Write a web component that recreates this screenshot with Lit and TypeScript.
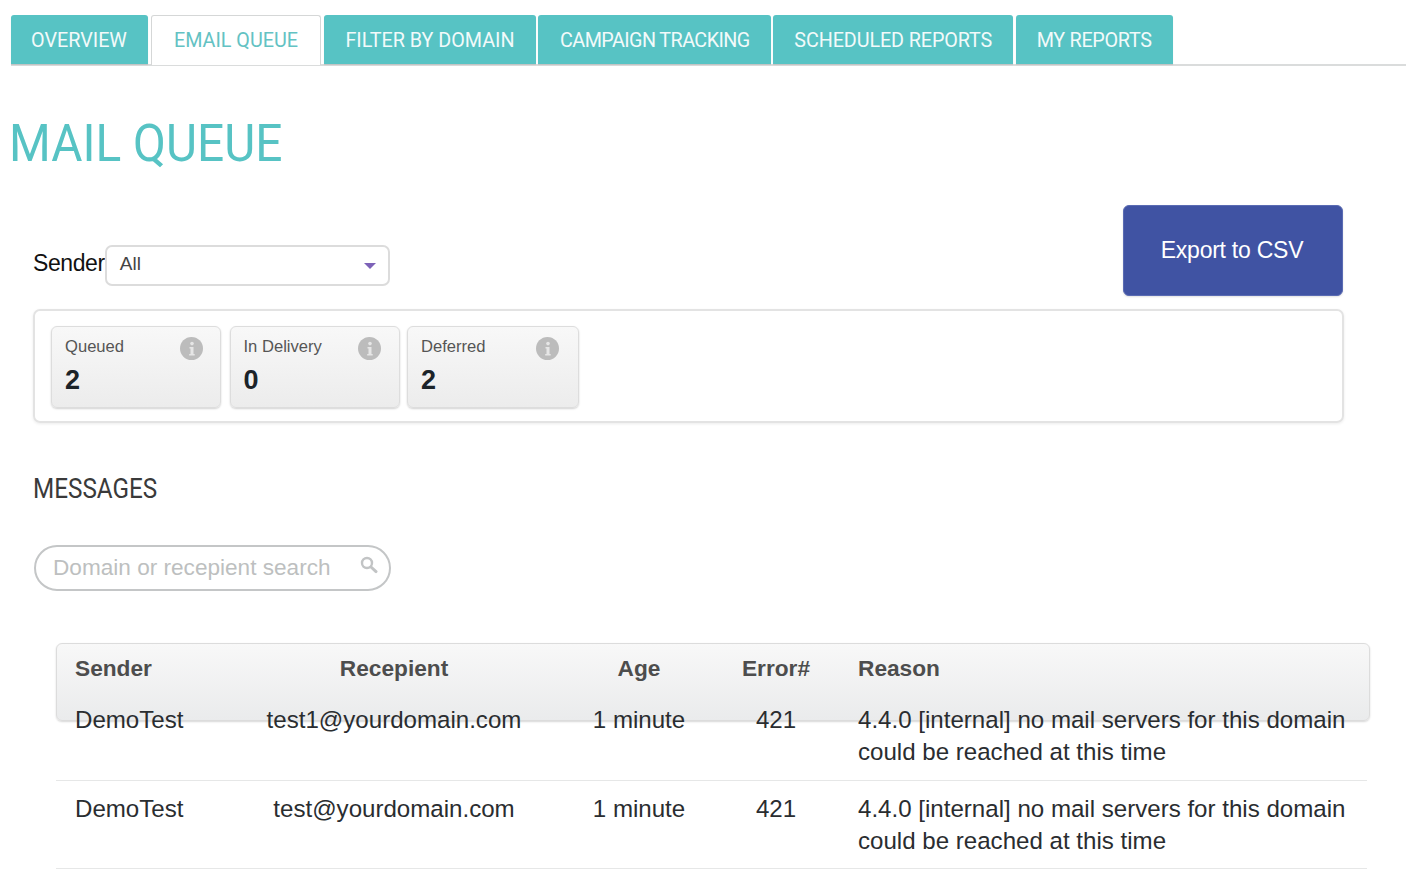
import { LitElement, html, css } from "lit";
import { customElement } from "lit/decorators.js";

const TABS = ["OVERVIEW", "EMAIL QUEUE", "FILTER BY DOMAIN", "CAMPAIGN TRACKING", "SCHEDULED REPORTS", "MY REPORTS"];
const STATS = [
  { label: "Queued", value: "2" },
  { label: "In Delivery", value: "0" },
  { label: "Deferred", value: "2" },
];
const ROWS = [
  { sender: "DemoTest", to: "test1@yourdomain.com" },
  { sender: "DemoTest", to: "test@yourdomain.com" },
];

@customElement("app-root")
export class AppRoot extends LitElement {
  static styles = css`
    :host { display: block; height: 880px; overflow: hidden; background: #fff; font-family: "Liberation Sans", Arial, sans-serif; color: #222; }
    .tabs { display: flex; gap: 2px; margin: 15px 0 0 11px; height: 51px; border-bottom: 2px solid #dadcdc; box-sizing: border-box; }
    .tab { height: 49px; box-sizing: border-box; display: flex; align-items: center; justify-content: center; background: #57c3c4; color: #f2fafa; font: 400 21px Roboto, sans-serif; border-radius: 3px 3px 0 0; flex: none; box-shadow: 0 1px 1px rgba(0,0,0,.12); }
    .tab span { display: inline-block; transform: scaleX(.94); white-space: nowrap; }
    .tab:nth-child(1) { width: 137px; padding-right: 1px; }
    .tab:nth-child(2) { width: 170px; margin-left: 1px; }
    .tab:nth-child(3) { width: 212px; margin-left: 1px; }
    .tab:nth-child(4) { width: 233px; letter-spacing: -0.6px; }
    .tab:nth-child(5) { width: 240px; letter-spacing: -0.1px; }
    .tab:nth-child(6) { width: 157px; margin-left: 1px; letter-spacing: -0.3px; }
    .tab.active { background: #fff; color: #63c2c3; border: 1px solid #d5d7d7; border-bottom: none; height: 50px; padding-bottom: 2px; z-index: 1; box-shadow: none; }
    h1 { margin: 48px 0 0 9px; height: 60px; font: 400 52px/60px Roboto, sans-serif; color: #57c3c4; transform: scaleX(.92); transform-origin: left; white-space: nowrap; }
    .content { padding: 31px 63px 0 34px; }
    .top { display: flex; justify-content: space-between; align-items: flex-end; height: 91px; }
    .sender { display: flex; align-items: center; margin: 0 0 10px -1px; font-size: 23px; color: #111; }
    .sender > span { letter-spacing: -0.4px; padding-bottom: 4px; }
    .select { width: 285px; height: 41px; box-sizing: border-box; border: 2px solid #dcdcdc; border-radius: 7px; padding: 0 12px 3px 13px; display: flex; align-items: center; justify-content: space-between; font-size: 19px; color: #444; }
    .arrow { width: 0; height: 0; border: 6px solid transparent; border-top: 6px solid #7d62b8; border-bottom: none; margin-top: 3px; }
    .export { width: 220px; height: 91px; border: 1px solid #5a6bb3; border-radius: 6px; background: #4053a3; color: #fff; font: 23px "Liberation Sans", sans-serif; letter-spacing: -0.25px; padding: 0 2px 1px 0; box-shadow: 0 1px 2px rgba(0,0,0,.12); }
    .statbox { margin: 13px -1px 0; height: 114px; box-sizing: border-box; border: 2px solid #e3e3e3; border-radius: 7px; padding: 15px 16px; display: flex; gap: 8.5px; box-shadow: 0 1px 3px rgba(0,0,0,.08); }
    .card { width: 170px; height: 82px; box-sizing: border-box; border: 1px solid #dddddd; border-radius: 6px; background: linear-gradient(#f8f8f8, #ececec); box-shadow: 0 1px 2px rgba(0,0,0,.18); padding: 9px 13px; position: relative; }
    .card:nth-child(3) { width: 172px; margin-left: -1px; }
    .card .lab { font-size: 16.6px; line-height: 22px; color: #555; }
    .card .num { font-size: 27px; line-height: 32px; font-weight: 700; color: #1b2329; margin-top: 6px; }
    .info { position: absolute; right: 17px; top: 10px; width: 23px; height: 23px; }
    .card:nth-child(2) .info { right: 18px; }
    .card:nth-child(3) .info { right: 19px; }
    h2 { margin: 48px 0 0 -1px; height: 36px; font: 400 28px/36px Roboto, sans-serif; color: #3a3a3a; transform: scaleX(.867); transform-origin: left; white-space: nowrap; }
    .search { margin-top: 38px; width: 357px; height: 46px; box-sizing: border-box; border: 2px solid #c4c6c7; border-radius: 23px; display: flex; align-items: center; padding: 0 11px 0 17px; }
    .search input { flex: 1; min-width: 0; border: none; outline: none; padding: 0; font: 22.6px "Liberation Sans", sans-serif; color: #555; background: transparent; }
    .search input::placeholder { color: #bdbfc0; opacity: 1; }
    .search svg { flex: none; margin-bottom: 6px; }
    .table { margin: 52px -24px 0 22px; }
    .grid { display: grid; grid-template-columns: 170px 298px 192px 82px 1fr; padding-left: 19px; box-sizing: border-box; }
    .head { height: 78px; width: 1314px; border: 1px solid #dcdcdc; border-radius: 6px; background: linear-gradient(#f8f8f8, #eaebec); box-shadow: 0 1px 2px rgba(0,0,0,.16); font-weight: 700; font-size: 22.7px; color: #4d4d4d; padding-left: 18px; padding-top: 8px; line-height: 32px; grid-template-rows: 32px; }
    .c { text-align: center; }
    .reason { padding-left: 41px; }
    .row { font-size: 24.1px; line-height: 32px; color: #2a2d30; padding-top: 12px; padding-bottom: 11px; border-bottom: 1px solid #e6e7e7; width: 1311px; position: relative; }
    .row.first { margin-top: -29px; padding-bottom: 12px; }
  `;

  info() {
    return html`<svg class="info" viewBox="0 0 23 23" aria-hidden="true">
      <circle cx="11.5" cy="11.5" r="11.5" fill="#bcbcbc"/>
      <circle cx="12" cy="6.6" r="1.8" fill="#e6e6e6"/>
      <path d="M9.5 10h4v7h1.2v1.6H9.2V17h1.3v-5.4H9.5z" fill="#e6e6e6"/>
    </svg>`;
  }

  render() {
    return html`
      <nav class="tabs">
        ${TABS.map((t, i) => html`<div class="tab ${i === 1 ? "active" : ""}"><span>${t}</span></div>`)}
      </nav>
      <h1>MAIL QUEUE</h1>
      <main class="content">
        <div class="top">
          <div class="sender"><span>Sender</span>
            <div class="select"><span>All</span><span class="arrow"></span></div>
          </div>
          <button class="export">Export to CSV</button>
        </div>
        <section class="statbox">
          ${STATS.map((s) => html`<div class="card"><div class="lab">${s.label}</div><div class="num">${s.value}</div>${this.info()}</div>`)}
        </section>
        <h2>MESSAGES</h2>
        <div class="search">
          <input placeholder="Domain or recepient search" />
          <svg width="18" height="18" viewBox="0 0 18 18" fill="none" stroke="#c2c4c5" aria-hidden="true"><circle cx="7" cy="7" r="5" stroke-width="2.4"/><path d="M11 11l5 4.6" stroke-width="3" stroke-linecap="round"/></svg>
        </div>
        <div class="table">
          <div class="grid head"><div>Sender</div><div class="c">Recepient</div><div class="c">Age</div><div class="c">Error#</div><div class="reason">Reason</div></div>
          ${ROWS.map((r, i) => html`<div class="grid row ${i === 0 ? "first" : ""}">
            <div>${r.sender}</div><div class="c">${r.to}</div><div class="c">1 minute</div><div class="c">421</div>
            <div class="reason">4.4.0 [internal] no mail servers for this domain could be reached at this time</div>
          </div>`)}
        </div>
      </main>
    `;
  }
}
